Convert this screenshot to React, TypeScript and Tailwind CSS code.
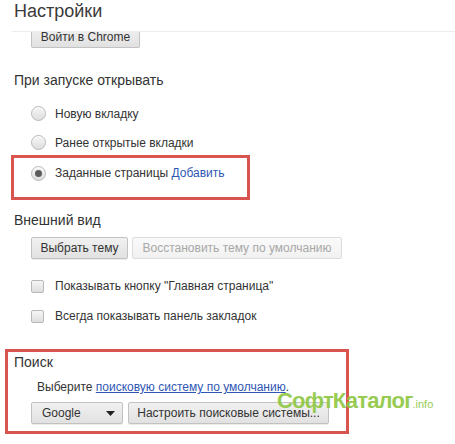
const font = { fontFamily: '"Liberation Sans", Arial, sans-serif' };

function Radio({ checked }: { checked?: boolean }) {
  return (
    <span className="flex h-[15px] w-[15px] shrink-0 items-center justify-center rounded-full border border-[#b8b8b8] bg-gradient-to-b from-[#f6f6f6] to-[#dedede] shadow-[inset_0_1px_0_#fff]">
      {checked && <span className="h-[7px] w-[7px] rounded-full bg-[#5c5c5c]" />}
    </span>
  );
}

function Checkbox() {
  return (
    <span className="block h-[13px] w-[13px] shrink-0 rounded-[2px] border border-[#b8b8b8] bg-gradient-to-b from-[#f6f6f6] to-[#dedede]" />
  );
}

function Btn({ children, disabled, className = "" }: { children: React.ReactNode; disabled?: boolean; className?: string }) {
  return (
    <div
      className={`flex h-[22px] items-center whitespace-nowrap rounded-[2px] border text-[12px] ${
        disabled
          ? "border-[#dcdcdc] bg-gradient-to-b from-[#fafafa] to-[#f1f1f1] text-[#a8a8a8]"
          : "border-[#c2c2c2] bg-gradient-to-b from-[#f1f1f1] to-[#e1e1e1] text-[#333] shadow-[0_1px_0_rgba(0,0,0,0.08)]"
      } ${className}`}
    >
      {children}
    </div>
  );
}

export default function App() {
  return (
    <div className="relative h-[444px] w-[455px] overflow-hidden whitespace-nowrap bg-white text-[12px] text-[#333]" style={font}>
      {/* Header */}
      <div className="h-[32px] pl-[14px]">
        <div className="h-[31px] pt-[2px] text-[18px] leading-[18px] text-[#3a3a3a]">Настройки</div>
        <div className="ml-[-2px] h-px bg-[#ececec]" />
      </div>

      {/* Sign-in button, partly hidden under the header */}
      <div className="ml-[31px] h-[16px] w-[109px] overflow-hidden">
        <div className="-mt-[6px] flex h-[22px] items-center justify-center rounded-[2px] border border-[#c2c2c2] bg-gradient-to-b from-[#f1f1f1] to-[#e1e1e1] text-[12px] shadow-[0_1px_0_rgba(0,0,0,0.08)]">
          Войти в Chrome
        </div>
      </div>

      {/* On startup */}
      <div className="ml-[14px] mt-[23px] text-[14px] leading-[18px]">При запуске открывать</div>
      <div className="mt-[10px] flex flex-col">
        <div className="flex h-[29px] items-center gap-[9px] pl-[31px]">
          <Radio />
          <span>Новую вкладку</span>
        </div>
        <div className="flex h-[29px] items-center gap-[9px] pl-[31px]">
          <Radio />
          <span>Ранее открытые вкладки</span>
        </div>
        <div className="-mt-[2px] ml-[11px] h-[45px] w-[239px] border-[3px] border-[#d9534f] pl-[17px]">
          <div className="flex h-[30px] items-center gap-[9px]">
            <Radio checked />
            <span>
              Заданные страницы <span className="text-[#2f56b5]">Добавить</span>
            </span>
          </div>
        </div>
      </div>

      {/* Appearance */}
      <div className="ml-[14px] mt-[11px] text-[14px] leading-[18px]">Внешний вид</div>
      <div className="ml-[31px] mt-[8px] flex gap-[4px]">
        <Btn className="w-[97px] justify-center">Выбрать тему</Btn>
        <Btn disabled className="w-[210px] justify-center">Восстановить тему по умолчанию</Btn>
      </div>
      <div className="mt-[12px] flex flex-col">
        <div className="flex h-[30px] items-center gap-[11px] pl-[31px]">
          <Checkbox />
          <span>Показывать кнопку "Главная страница"</span>
        </div>
        <div className="flex h-[30px] items-center gap-[11px] pl-[31px]">
          <Checkbox />
          <span>Всегда показывать панель закладок</span>
        </div>
      </div>

      {/* Search */}
      <div className="ml-[5px] mt-[18px] h-[85px] w-[344px] border-[3px] border-[#d9534f] pl-[6px]">
        <div className="mt-[1px] text-[14px] leading-[18px]">Поиск</div>
        <div className="ml-[23px] mt-[7px] leading-[18px]">
          Выберите <span className="text-[#2f56b5] underline">поисковую систему по умолчанию</span>.
        </div>
        <div className="ml-[17px] mt-[6px] flex gap-[5px]">
          <Btn className="w-[92px] justify-between pl-[10px] pr-[7px]">
            <span>Google</span>
            <svg width="9" height="5" viewBox="0 0 9 5">
              <path d="M0 0h9L4.5 5z" fill="#222" />
            </svg>
          </Btn>
          <Btn className="w-[201px] justify-center">Настроить поисковые системы...</Btn>
        </div>
      </div>

      {/* Watermark */}
      <div className="pointer-events-none absolute left-[277px] top-[390px] flex items-baseline text-[#8dc63f] opacity-90">
        <span className="text-[22px] font-bold leading-none tracking-[-0.8px]">СофтКаталог</span>
        <span className="text-[11px] leading-none">.info</span>
      </div>
    </div>
  );
}
